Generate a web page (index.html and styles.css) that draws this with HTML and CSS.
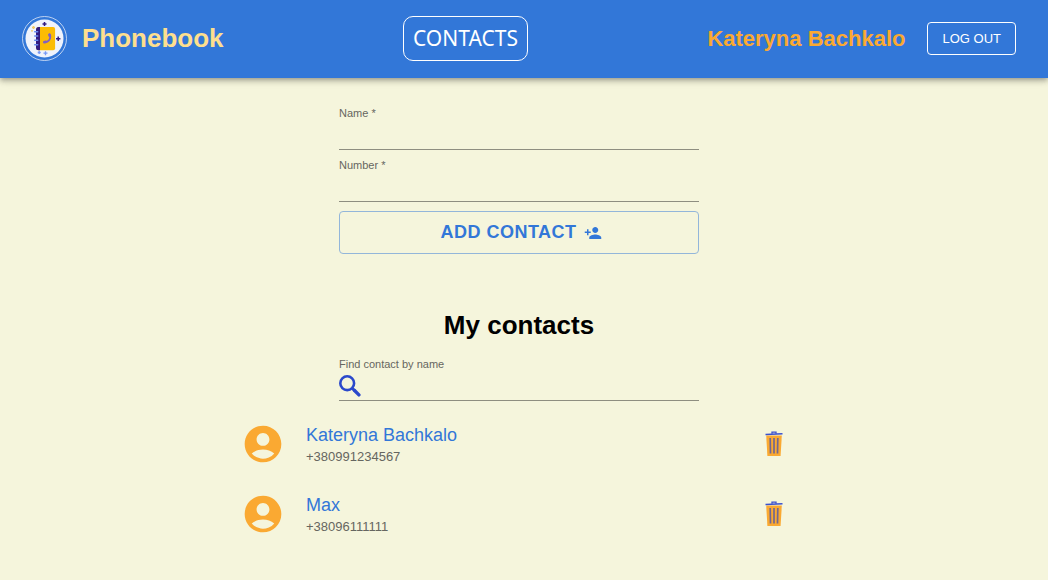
FILE: index.html
```html
<!DOCTYPE html>
<html lang="en">
<head>
<meta charset="utf-8">
<title>Phonebook</title>
<link rel="stylesheet" href="styles.css">
</head>
<body>
<svg class="sprite" aria-hidden="true">
  <symbol id="avatar" viewBox="0 0 24 24"><path fill="#faa932" d="M12 2C6.480 2 2 6.480 2 12s4.480 10 10 10 10-4.480 10-10S17.520 2 12 2zm0 4c1.930 0 3.500 1.570 3.500 3.500S13.930 13 12 13s-3.500-1.570-3.500-3.500S10.070 6 12 6zm0 14c-2.030 0-4.430-.820-6.140-2.880C7.550 15.800 9.680 15 12 15s4.450.8 6.140 2.120C16.430 19.180 14.030 20 12 20z"/></symbol>
  <symbol id="trash" viewBox="0 0 18 26">
    <path fill="#faa932" d="M1.200 4.500h15.600L15.600 25H2.400z"/>
    <path fill="none" stroke="#3a50cc" stroke-width="1.300" d="M7 2.700V1.200h4v1.500"/>
    <path stroke="#3a50cc" stroke-width="1.500" d="M.5 3.400 17.500 2.800"/>
    <path stroke="#75678d" stroke-width="1.700" d="M5.200 7l.3 15.500M9 7v15.500M12.800 7l-.3 15.500"/>
  </symbol>
</svg>
<header class="header">
  <a class="brand" href="#">
    <svg class="logo" viewBox="0 0 45 45" aria-hidden="true">
      <circle cx="22.500" cy="22.500" r="22" fill="none" stroke="#dfe9f8" stroke-width=".8"/>
      <circle cx="22.500" cy="22.500" r="19" fill="#eff3fc"/>
      <rect x="14.500" y="11" width="18.600" height="23.200" rx="2" fill="#fbbc04"/>
      <path fill="#311b80" d="M16.500 11h1.500v23.200h-1.500a2.500 2.500 0 0 1-2.500-2.500V13.500a2.500 2.500 0 0 1 2.500-2.500z"/>
      <path stroke="#6a8cf0" stroke-width="1.500" stroke-linecap="round" d="M12.700 15.700h3M12.700 20h3M12.700 24.300h3M12.700 28.700h3"/>
      <path fill="none" stroke="#8060c4" stroke-width="1.700" stroke-linecap="round" d="M27.600 18.500c2 3.700-.7 7.700-5.200 7.700"/>
      <path stroke="#8060c4" stroke-width="2.700" stroke-linecap="round" d="M27.400 18.700l.5 1.200M22.300 26.200l1.200-.3"/>
      <path stroke="#311b80" stroke-width="1.500" d="M22.500 6v4M20.500 8h4M36.200 20.500v4.400M34 22.700h4.400"/>
      <path stroke="#7598f5" stroke-width="1.300" d="M23.500 35.200v4M21.500 37.200h4M17.200 35v3M15.700 36.500h3"/>
      <path stroke="#efcb68" stroke-width="1.300" d="M11.500 10v3M10 11.500h3M9 14.800h2"/>
    </svg>
    <span>Phonebook</span>
  </a>
  <nav><a class="nav-link" href="#">CONTACTS</a></nav>
  <div class="user">
    <span class="user-name">Kateryna Bachkalo</span>
    <button class="logout" type="button">LOG OUT</button>
  </div>
</header>
<main class="main">
  <form class="form">
    <div class="field">
      <label for="name">Name *</label>
      <input id="name" type="text" required>
    </div>
    <div class="field">
      <label for="number">Number *</label>
      <input id="number" type="tel" required>
    </div>
    <button class="add" type="submit">ADD CONTACT
      <svg class="add-icon" viewBox="0 0 24 24" aria-hidden="true"><path fill="currentColor" d="M15 12c2.210 0 4-1.790 4-4s-1.790-4-4-4-4 1.790-4 4 1.790 4 4 4zm-9-2V7H4v3H1v2h3v3h2v-3h3v-2H6zm9 4c-2.670 0-8 1.340-8 4v2h16v-2c0-2.660-5.330-4-8-4z"/></svg>
    </button>
  </form>
  <h2 class="title">My contacts</h2>
  <div class="field search">
    <label for="filter">Find contact by name</label>
    <div class="search-box">
      <svg class="search-icon" viewBox="0 0 22 22" aria-hidden="true"><circle cx="8.200" cy="8.200" r="6.900" fill="none" stroke="#2b49cb" stroke-width="2.600"/><path stroke="#2b49cb" stroke-width="2.600" d="M13 13l3 3"/><path stroke="#2b49cb" stroke-width="3.400" stroke-linecap="round" d="M15.300 15.300l4.600 4.600"/></svg>
      <input id="filter" type="text">
    </div>
  </div>
  <ul class="list">
    <li class="contact">
      <svg class="avatar" aria-hidden="true"><use href="#avatar"/></svg>
      <div class="details"><span class="contact-name">Kateryna Bachkalo</span><span class="contact-number">+380991234567</span></div>
      <button class="delete" type="button" aria-label="Delete Kateryna Bachkalo"><svg class="trash" aria-hidden="true"><use href="#trash"/></svg></button>
    </li>
    <li class="contact">
      <svg class="avatar" aria-hidden="true"><use href="#avatar"/></svg>
      <div class="details"><span class="contact-name">Max</span><span class="contact-number">+38096111111</span></div>
      <button class="delete" type="button" aria-label="Delete Max"><svg class="trash" aria-hidden="true"><use href="#trash"/></svg></button>
    </li>
  </ul>
</main>
</body>
</html>
```
FILE: styles.css
```css
* {
  box-sizing: border-box;
}

body {
  margin: 0;
  background: #f5f5dc;
  font-family: "Liberation Sans", Arial, sans-serif;
}

button {
  font-family: inherit;
  background: none;
  cursor: pointer;
}

.sprite {
  position: absolute;
  width: 0;
  height: 0;
}

.header {
  display: flex;
  align-items: center;
  justify-content: space-between;
  padding: 16px 32px 17px 22px;
  background: #3277d8;
  box-shadow: 0 2px 4px -1px rgba(0, 0, 0, 0.2), 0 4px 5px rgba(0, 0, 0, 0.14), 0 1px 10px rgba(0, 0, 0, 0.12);
}

.brand {
  display: flex;
  align-items: center;
  gap: 15px;
  color: #fddf8f;
  font-size: 26px;
  font-weight: bold;
  text-decoration: none;
}

.logo {
  width: 45px;
  height: 45px;
}

.nav-link {
  display: block;
  padding: 0 9px;
  border: 1px solid #fff;
  border-radius: 10px;
  color: #fff;
  font-family: "Noto Sans", sans-serif;
  font-size: 21px;
  line-height: 43px;
  text-decoration: none;
}

.user {
  display: flex;
  align-items: center;
  gap: 22px;
}

.user-name {
  color: #faa932;
  font-size: 22px;
  font-weight: bold;
  white-space: nowrap;
}

.logout {
  padding: 0 14px;
  border: 1px solid #fff;
  border-radius: 4px;
  color: #fff;
  font-size: 13px;
  line-height: 31px;
  white-space: nowrap;
}

.main {
  display: flex;
  flex-direction: column;
  align-items: center;
  padding: 27px 26px 32px 16px;
}

.form,
.search {
  width: 100%;
  max-width: 360px;
}

.field {
  display: flex;
  flex-direction: column;
}

.field label {
  color: #666660;
  font-size: 11px;
  line-height: 16px;
}

.field input {
  width: 100%;
  height: 28px;
  padding: 4px 0;
  border: 0;
  background: none;
  font: inherit;
  outline: none;
}

.form .field {
  margin-bottom: 7px;
}

.form .field input {
  height: 29px;
  border-bottom: 1px solid #8e8e80;
}

.add {
  display: flex;
  align-items: center;
  justify-content: center;
  gap: 7px;
  width: 100%;
  height: 43px;
  margin-top: 9px;
  padding: 0 0 0 4px;
  border: 1px solid #93b6da;
  border-radius: 4px;
  color: #3277d8;
  font-size: 18px;
  font-weight: bold;
  letter-spacing: 0.5px;
}

.add-icon {
  width: 18px;
  height: 18px;
}

.title {
  margin: 56px 0 16px;
  color: #000;
  font-size: 26px;
  line-height: 30px;
}

.search-box {
  display: flex;
  align-items: center;
  gap: 8px;
  border-bottom: 1px solid #8e8e80;
}

.search-icon {
  flex: none;
  width: 22px;
  height: 22px;
}

.list {
  width: 100%;
  max-width: 556px;
  margin: 20px 0 0;
  padding: 0;
  list-style: none;
}

.contact {
  display: flex;
  align-items: center;
  height: 46px;
  margin-bottom: 24px;
}

.avatar {
  width: 44px;
  height: 44px;
  margin-right: 21px;
}

.details {
  flex: 1;
  display: flex;
  flex-direction: column;
  padding-top: 2px;
}

.contact-name {
  color: #3277d8;
  font-size: 18px;
  line-height: 24px;
}

.contact-number {
  color: #666660;
  font-size: 13px;
  line-height: 20px;
}

.delete {
  display: flex;
  padding: 0;
  margin-right: 14px;
  border: 0;
}

.trash {
  width: 18px;
  height: 26px;
}
```
